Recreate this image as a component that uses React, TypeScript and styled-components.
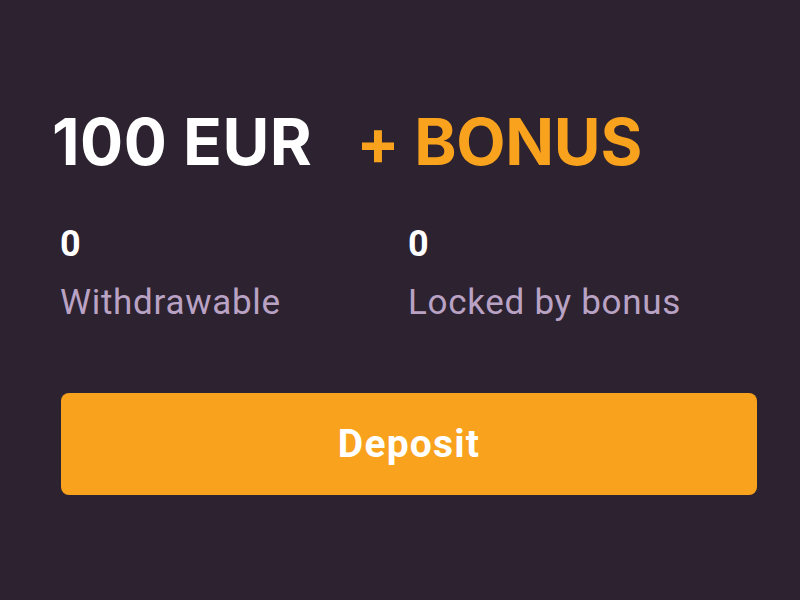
import React from 'react';
import styled, { createGlobalStyle } from 'styled-components';

const GlobalStyle = createGlobalStyle`
	html, body {
		margin: 0;
		padding: 0;
		background: #2c2230;
	}
`;

const Root = styled.div`
	width: 800px;
	height: 600px;
	box-sizing: border-box;
	padding: 98px 43px 0 52px;
	background: #2c2230;
	font-family: Roboto, "Liberation Sans", sans-serif;
`;

const Headline = styled.h1`
	margin: 0;
	display: flex;
	gap: 44px;
	font-family: Inter, "Liberation Sans", sans-serif;
	font-size: 64px;
	font-weight: 700;
	line-height: 88px;
	letter-spacing: 0.5px;
`;

const Amount = styled.span`
	color: #ffffff;
`;

const Bonus = styled.span`
	color: #f9a21d;
	letter-spacing: -0.3px;
`;

const Stats = styled.div`
	display: grid;
	grid-template-columns: 348px 1fr;
	margin: 38px 0 0 8px;
`;

const Stat = styled.div`
	display: flex;
	flex-direction: column;
`;

const Value = styled.span`
	color: #ffffff;
	font-size: 36px;
	font-weight: 700;
	line-height: 40px;
	letter-spacing: 1px;
`;

const Label = styled.span`
	color: #b9a2c4;
	font-size: 35px;
	line-height: 48px;
	letter-spacing: 0.7px;
	margin-top: 15px;
`;

const DepositButton = styled.button`
	display: flex;
	align-items: center;
	justify-content: center;
	width: 696px;
	height: 102px;
	margin: 66px 0 0 9px;
	border: none;
	border-radius: 8px;
	background: #f9a21d;
	color: #ffffff;
	font-family: Roboto, "Liberation Sans", sans-serif;
	font-size: 39px;
	font-weight: 700;
	letter-spacing: 1.2px;
	cursor: pointer;
`;

const App: React.FC = () => (
	<>
		<GlobalStyle />
		<Root>
			<Headline>
				<Amount>100 EUR</Amount>
				<Bonus>+ BONUS</Bonus>
			</Headline>
			<Stats>
				<Stat>
					<Value>0</Value>
					<Label>Withdrawable</Label>
				</Stat>
				<Stat>
					<Value>0</Value>
					<Label>Locked by bonus</Label>
				</Stat>
			</Stats>
			<DepositButton>Deposit</DepositButton>
		</Root>
	</>
);

export default App;
